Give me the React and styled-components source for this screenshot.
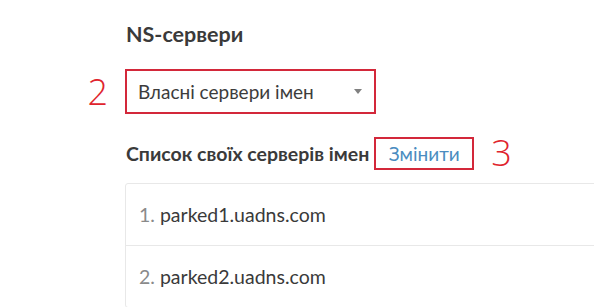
import React from 'react';
import styled, { createGlobalStyle } from 'styled-components';

const GlobalStyle = createGlobalStyle`
  html, body {
    margin: 0;
    padding: 0;
    background: #ffffff;
    font-family: Lato, "Open Sans", sans-serif;
    color: #333;
  }
`;

const Page = styled.div`
  width: 594px;
  height: 307px;
  overflow: hidden;
  padding: 21px 0 0 126px;
  box-sizing: border-box;
`;

const Title = styled.h2`
  margin: 0;
  font-size: 21.5px;
  font-weight: 700;
  line-height: 26px;
  color: #3a3a3a;
`;

const SelectWrap = styled.div`
  position: relative;
  margin-top: 22px;
  margin-left: -1px;
  width: 251px;
`;

const Select = styled.div`
  height: 45px;
  box-sizing: border-box;
  border: 2px solid #d3283a;
  display: flex;
  align-items: center;
  justify-content: space-between;
  padding: 0 12px 0 11px;
  font-size: 19px;
  color: #3c3c3c;
`;

const Caret = styled.span`
  width: 0;
  height: 0;
  border-left: 4px solid transparent;
  border-right: 4px solid transparent;
  border-top: 5px solid #808080;
`;

const Marker = styled.span`
  position: absolute;
  top: 50%;
  transform: translateY(-50%);
  right: calc(100% + 17px);
  font-family: "Open Sans", Lato, sans-serif;
  font-weight: 300;
  font-size: 36px;
  line-height: 1;
  color: #e0242d;
`;

const InlineMarker = styled.span`
  font-family: "Open Sans", Lato, sans-serif;
  font-weight: 300;
  font-size: 36px;
  line-height: 1;
  color: #e0242d;
  margin-left: 17px;
`;

const ListHead = styled.div`
  display: flex;
  align-items: center;
  margin-top: 21px;
`;

const Subtitle = styled.span`
  font-size: 19.5px;
  font-weight: 700;
  color: #3a3a3a;
`;

const EditButton = styled.span`
  margin-left: 5px;
  height: 33px;
  width: 100px;
  box-sizing: border-box;
  border: 2px solid #d3283a;
  display: flex;
  align-items: center;
  justify-content: center;
  font-size: 19px;
  color: #4a8cc0;
`;

const List = styled.ol`
  list-style: none;
  margin: 12px 0 0 -1px;
  padding: 0;
  width: 520px;
  border: 1px solid #e8e8e8;
  border-radius: 3px;
`;

const Item = styled.li`
  height: 61px;
  display: flex;
  align-items: center;
  padding-left: 13px;
  font-size: 19.5px;
  color: #3a3a3a;
  & + & {
    border-top: 1px solid #e8e8e8;
  }
`;

const Num = styled.span`
  color: #8a8a8a;
  margin-right: 5px;
`;

const servers = ['parked1.uadns.com', 'parked2.uadns.com'];

export default function App() {
  return (
    <>
      <GlobalStyle />
      <Page>
        <Title>NS-сервери</Title>
        <SelectWrap>
          <Marker>2</Marker>
          <Select>
            <span>Власні сервери імен</span>
            <Caret />
          </Select>
        </SelectWrap>
        <ListHead>
          <Subtitle>Список своїх серверів імен</Subtitle>
          <EditButton>Змінити</EditButton>
          <InlineMarker>3</InlineMarker>
        </ListHead>
        <List>
          {servers.map((s, i) => (
            <Item key={s}>
              <Num>{i + 1}.</Num>
              {s}
            </Item>
          ))}
        </List>
      </Page>
    </>
  );
}
